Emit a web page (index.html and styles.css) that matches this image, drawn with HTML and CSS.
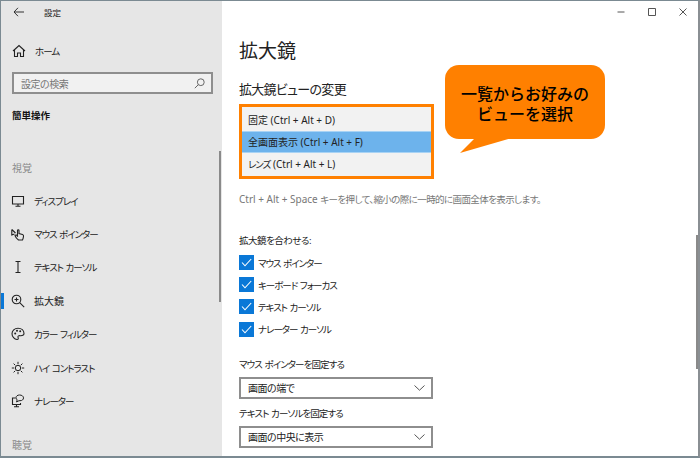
FILE: index.html
```html
<!DOCTYPE html>
<html lang="ja">
<head>
<meta charset="utf-8">
<title>設定</title>
<link rel="stylesheet" href="styles.css">
</head>
<body>
<div class="window">
  <aside class="sidebar">
    <div class="titlebar">
      <svg class="back" width="12" height="10" viewBox="0 0 12 10"><path d="M5 .8 1 5l4 4.2M1 5h10" fill="none" stroke="#333" stroke-width="1"/></svg>
      <span class="apptitle">設定</span>
    </div>
    <div class="home">
      <svg class="nav-icon" width="14" height="14" viewBox="0 0 14 14"><path d="M1 7 7 1.500 13 7M2.500 6v6.500h3V9h3v3.500h3V6" fill="none" stroke="#222" stroke-width="1.100"/></svg>
      <span class="kana">ホーム</span>
    </div>
    <div class="search">
      <span class="tight">設定の検索</span>
      <svg width="11" height="11" viewBox="0 0 11 11"><circle cx="6.800" cy="4.200" r="3.400" fill="none" stroke="#666"/><path d="M4.400 6.600.8 10.200" stroke="#666"/></svg>
    </div>
    <div class="section-title">簡単操作</div>
    <div class="group-label first">視覚</div>
    <nav class="nav">
      <div class="nav-item">
        <svg class="nav-icon" width="14" height="14" viewBox="0 0 14 14"><path d="M1.500 2.500h11v7.500h-11zM7 10v2.200M4.500 12.200h5" fill="none" stroke="#222" stroke-width="1.100"/></svg>
        <span class="kana">ディスプレイ</span>
      </div>
      <div class="nav-item">
        <svg class="nav-icon" width="14" height="14" viewBox="0 0 14 14"><path d="M.8 2.500 4.500 6M.8 2.500V8L3.500 7M7.500 13c-1.500-1-3-3-3.500-4.500.5-.8 1.500-.5 2.500.5V3.500c0-1 1.500-1 1.500 0V6.500l3.500 1c1 .3 1.200 1 1 2-.2 1.500-.5 2.500-1 3.500z" fill="none" stroke="#222" stroke-width="1.100"/></svg>
        <span class="kana">マウス ポインター</span>
      </div>
      <div class="nav-item">
        <svg class="nav-icon" width="14" height="14" viewBox="0 0 14 14"><path d="M4.500 1.500h5M7 1.500v11M4.500 12.500h5" fill="none" stroke="#222" stroke-width="1.100"/></svg>
        <span class="kana">テキスト カーソル</span>
      </div>
      <div class="nav-item active">
        <svg class="nav-icon" width="14" height="14" viewBox="0 0 14 14"><circle cx="5.500" cy="5.500" r="4.300" fill="none" stroke="#222" stroke-width="1.100"/><path d="M8.700 8.700 13.200 13.200M3.500 5.500h4M5.500 3.500v4" fill="none" stroke="#222" stroke-width="1.100"/></svg>
        <span>拡大鏡</span>
      </div>
      <div class="nav-item">
        <svg class="nav-icon" width="14" height="14" viewBox="0 0 14 14"><path d="M7 1.200C3.500 1.200 1 3.700 1 6.700c0 3 2.500 5.800 5 5.800 1.800 0 1.200-1.500 1-2.300-.3-1.300.8-1.700 2.200-1.500 2 .2 3.800-.4 3.800-2.200C13 3.500 10.500 1.200 7 1.200z" fill="none" stroke="#222" stroke-width="1.100"/><circle cx="4.200" cy="6.500" r="1" fill="#222"/><circle cx="6" cy="3.800" r="1" fill="#222"/><circle cx="9.200" cy="4.200" r="1" fill="#222"/></svg>
        <span class="kana">カラー フィルター</span>
      </div>
      <div class="nav-item">
        <svg class="nav-icon" width="14" height="14" viewBox="0 0 14 14"><circle cx="7" cy="7" r="2.700" fill="none" stroke="#222"/><path d="M7 .8v2.400M7 10.800v2.400M.8 7h2.400M10.800 7h2.400M2.600 2.600l1.700 1.700M9.700 9.700l1.700 1.700M11.400 2.600 9.700 4.300M4.300 9.700l-1.700 1.700" stroke="#222"/></svg>
        <span class="kana">ハイ コントラスト</span>
      </div>
      <div class="nav-item">
        <svg class="nav-icon" width="14" height="14" viewBox="0 0 14 14"><path d="M4.500 4H1.500v6.500h8V9M5.500 10.500v2.300M3 12.800h5" fill="none" stroke="#222" stroke-width="1.100"/><path d="M8.500 1C6.500 1 5 2.200 5 3.700c0 1 .5 1.700 1.200 2.200L5.500 8l2.500-1.300h1c2 0 3.500-1 3.500-2.800C12.500 2.200 10.800 1 8.500 1z" fill="none" stroke="#222"/></svg>
        <span class="kana">ナレーター</span>
      </div>
    </nav>
    <div class="group-label">聴覚</div>
    <div class="side-scroll"></div>
  </aside>

  <main class="content">
    <div class="controls">
      <svg width="10" height="10" viewBox="0 0 10 10"><path d="M1.500 5h7" stroke="#555"/></svg>
      <svg width="10" height="10" viewBox="0 0 10 10"><path d="M2 1.500h6.500V8.500H1.500V1.500z" fill="none" stroke="#555"/></svg>
      <svg width="10" height="10" viewBox="0 0 10 10"><path d="M1.500 1.500l7 7M8.500 1.500l-7 7" stroke="#555"/></svg>
    </div>
    <h1 class="page-title">拡大鏡</h1>
    <h2 class="subhead">拡大鏡ビューの変更</h2>
    <div class="view-list">
      <div class="view-row"><span>固定 (Ctrl + Alt + D)</span></div>
      <div class="view-row selected"><span>全画面表示 (Ctrl + Alt + F)</span></div>
      <div class="view-row"><span><span class="kana">レンズ</span> (Ctrl + Alt + L)</span></div>
    </div>
    <p class="hint">Ctrl + Alt + Space <span class="hint-jp">キーを押して、縮小の際に一時的に画面全体を表示します。</span></p>
    <p class="field-label follow">拡大鏡を合わせる:</p>
    <div class="checks">
      <label class="check"><svg width="15" height="15" viewBox="0 0 15 15"><rect width="15" height="15" fill="#0a78d7"/><path d="M3 7.500 6 10.800 12.200 4" fill="none" stroke="#fff" stroke-width="1.100"/></svg><span class="kana">マウス ポインター</span></label>
      <label class="check"><svg width="15" height="15" viewBox="0 0 15 15"><rect width="15" height="15" fill="#0a78d7"/><path d="M3 7.500 6 10.800 12.200 4" fill="none" stroke="#fff" stroke-width="1.100"/></svg><span class="kana">キーボード フォーカス</span></label>
      <label class="check"><svg width="15" height="15" viewBox="0 0 15 15"><rect width="15" height="15" fill="#0a78d7"/><path d="M3 7.500 6 10.800 12.200 4" fill="none" stroke="#fff" stroke-width="1.100"/></svg><span class="kana">テキスト カーソル</span></label>
      <label class="check"><svg width="15" height="15" viewBox="0 0 15 15"><rect width="15" height="15" fill="#0a78d7"/><path d="M3 7.500 6 10.800 12.200 4" fill="none" stroke="#fff" stroke-width="1.100"/></svg><span class="kana">ナレーター カーソル</span></label>
    </div>
    <p class="field-label pointer">マウス ポインターを固定する</p>
    <div class="select"><span class="tight">画面の端で</span><svg width="11" height="6" viewBox="0 0 11 6"><path d="M.5.500 5.500 5.200 10.500.500" fill="none" stroke="#555"/></svg></div>
    <p class="field-label cursor">テキスト カーソルを固定する</p>
    <div class="select"><span class="tight">画面の中央に表示</span><svg width="11" height="6" viewBox="0 0 11 6"><path d="M.5.500 5.500 5.200 10.500.500" fill="none" stroke="#555"/></svg></div>
    <div class="main-scroll"></div>
    <div class="callout">
      <p>一覧からお好みの<br>ビューを選択</p>
      <svg class="tail" width="56" height="16" viewBox="0 0 56 16"><path d="M15 0 0 15 52 0z" fill="#ff8000"/></svg>
    </div>
  </main>
</div>
</body>
</html>
```
FILE: styles.css
```css
* { box-sizing: border-box; }
html, body { margin: 0; height: 100%; }
body {
  background: #fff;
  font-family: "Noto Sans", "Noto Sans CJK JP", sans-serif;
  font-feature-settings: "palt";
  color: #222;
  overflow: hidden;
}
p, h1, h2 { margin: 0; font-weight: 400; }
.kana { font-size: 9.500px; letter-spacing: -1px; word-spacing: 1px; }
.tight { letter-spacing: -0.500px; }
.window {
  position: relative;
  width: 700px;
  height: 458px;
  display: grid;
  grid-template-columns: 221px 1fr;
  border-top: 1px solid #7b8a92;
  border-left: 1px solid #7b8a92;
  border-right: 2px solid #8a8f93;
  border-bottom: 2px solid #7b8a92;
  overflow: hidden;
}
.sidebar {
  position: relative;
  background: #e6e6e6;
  font-size: 10px;
  min-width: 0;
}
.titlebar {
  height: 22px;
  display: flex;
  align-items: center;
  padding-left: 12px;
}
.apptitle { margin-left: 19px; font-size: 8.500px; }
.home {
  margin-top: 16px;
  height: 24px;
  display: flex;
  align-items: center;
  padding-left: 11px;
  gap: 9px;
  font-size: 10px;
}
.search {
  margin: 9px 9px 0 11px;
  height: 22px;
  border: 2px solid #8e8e8e;
  background: #f1f1f1;
  display: flex;
  align-items: center;
  justify-content: space-between;
  padding: 0 6px 0 7px;
  font-size: 10px;
  color: #777;
}
.section-title {
  margin: 12px 0 0 11px;
  height: 20px;
  line-height: 20px;
  font-size: 9.500px;
  font-weight: 700;
  color: #111;
}
.group-label {
  margin: 17px 0 0 11px;
  font-size: 10px;
  line-height: 20px;
  color: #8a8a8a;
}
.group-label.first { margin-top: 32px; }
.nav { margin-top: 6px; }
.nav-item {
  position: relative;
  height: 33.400px;
  display: flex;
  align-items: center;
  padding-left: 10px;
  gap: 9px;
  font-size: 10px;
}
.nav-item.active::before {
  content: "";
  position: absolute;
  left: 0;
  top: 9px;
  width: 3px;
  height: 16px;
  background: #0a78d7;
}
.nav-icon { flex: none; }
.side-scroll {
  position: absolute;
  right: 1px;
  top: 150px;
  width: 2px;
  height: 151px;
  background: #8a8a8a;
}
.content {
  position: relative;
  padding-left: 17px;
  min-width: 0;
}
.controls {
  position: absolute;
  top: 6px;
  right: 10px;
  display: flex;
  gap: 21px;
}
.page-title {
  padding-top: 37px;
  font-size: 19px;
  line-height: 26px;
  color: #222;
}
.subhead {
  margin-top: 15px;
  font-size: 13px;
  letter-spacing: -0.700px;
  line-height: 20px;
  color: #222;
}
.view-list {
  margin-top: 5px;
  width: 195px;
  height: 75px;
  border: 3px solid #ff8000;
  background: #f2f2f2;
  padding-top: 1px;
  font-size: 10px;
}
.view-row {
  height: 22.500px;
  display: flex;
  align-items: center;
  padding-left: 6px;
  color: #222;
}
.view-row.selected {
  background: #6db3ec;
  border-top: 1px solid #a9d3f4;
  border-bottom: 1px solid #a9d3f4;
}
.hint {
  margin-top: 12px;
  font-size: 10px;
  line-height: 16px;
  color: #777;
}
.hint-jp { font-size: 9.500px; letter-spacing: -0.600px; }
.field-label {
  font-size: 9.500px;
  letter-spacing: -0.900px;
  word-spacing: 1px;
  line-height: 16px;
  color: #222;
}
.field-label.follow { margin-top: 25px; letter-spacing: -0.500px; }
.checks {
  margin-top: 6px;
  display: flex;
  flex-direction: column;
  gap: 7.200px;
}
.check {
  display: flex;
  align-items: center;
  gap: 4px;
  height: 15px;
  font-size: 10px;
}
.field-label.pointer { margin-top: 20px; }
.field-label.cursor { margin-top: 7px; }
.select {
  margin-top: 4px;
  width: 194px;
  height: 22px;
  border: 2px solid #8e8e8e;
  display: flex;
  align-items: center;
  justify-content: space-between;
  padding: 0 6px 0 7px;
  font-size: 10px;
}
.main-scroll {
  position: absolute;
  right: 0;
  top: 234px;
  width: 2px;
  height: 134px;
  background: #8a8a8a;
}
.callout {
  position: absolute;
  left: 223px;
  top: 64px;
  width: 160px;
  height: 74px;
  border-radius: 14px;
  background: #ff8000;
  color: #000;
  display: flex;
  align-items: center;
  justify-content: center;
  text-align: center;
  padding-top: 4px;
}
.callout p {
  font-size: 16px;
  line-height: 20px;
  font-weight: 500;
  font-feature-settings: normal;
}
.tail {
  position: absolute;
  left: 15px;
  top: 73px;
}
```
